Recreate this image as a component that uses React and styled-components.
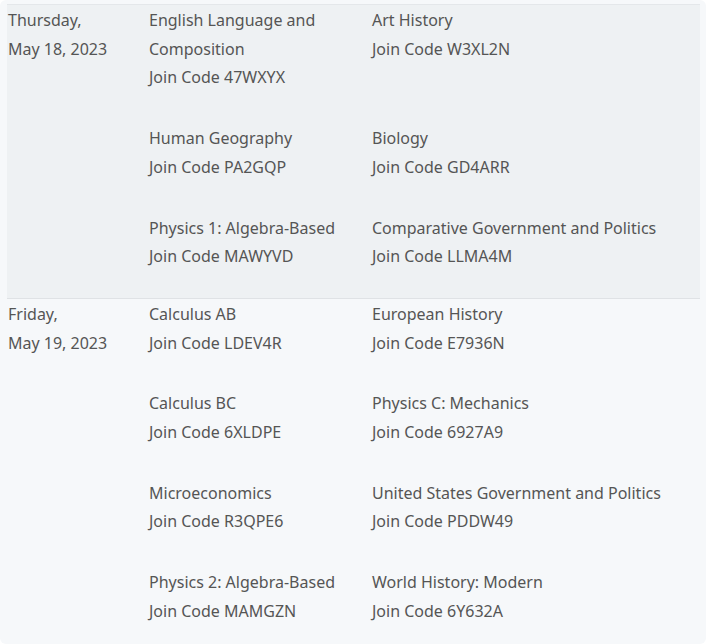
import React from 'react'
import styled, { createGlobalStyle } from 'styled-components'

const SCHEDULE = [
  {
    day: 'Thursday,',
    date: 'May 18, 2023',
    shaded: true,
    exams: [
      ['English Language and Composition', '47WXYX', 'Art History', 'W3XL2N'],
      ['Human Geography', 'PA2GQP', 'Biology', 'GD4ARR'],
      ['Physics 1: Algebra-Based', 'MAWYVD', 'Comparative Government and Politics', 'LLMA4M'],
    ],
  },
  {
    day: 'Friday,',
    date: 'May 19, 2023',
    exams: [
      ['Calculus AB', 'LDEV4R', 'European History', 'E7936N'],
      ['Calculus BC', '6XLDPE', 'Physics C: Mechanics', '6927A9'],
      ['Microeconomics', 'R3QPE6', 'United States Government and Politics', 'PDDW49'],
      ['Physics 2: Algebra-Based', 'MAMGZN', 'World History: Modern', '6Y632A'],
    ],
  },
]

const GlobalStyle = createGlobalStyle`
  body {
    margin: 0;
    background: #ffffff;
  }
`

const App = () => (
  <Page>
    <GlobalStyle />
    <Table>
      {SCHEDULE.map(({ day, date, shaded, exams }) => (
        <Row key={date} shaded={shaded}>
          <DateCell>
            {day}
            <br />
            {date}
          </DateCell>
          {exams.map(([a, codeA, b, codeB]) => (
            <React.Fragment key={codeA}>
              <Exam>
                <ExamName>{a}</ExamName>
                Join Code {codeA}
              </Exam>
              <Exam>
                <ExamName>{b}</ExamName>
                Join Code {codeB}
              </Exam>
            </React.Fragment>
          ))}
        </Row>
      ))}
    </Table>
  </Page>
)

const Page = styled.div`
  width: 706px;
  height: 644px;
  box-sizing: border-box;
  background: #f6f8fa;
  border-radius: 6px;
  padding: 4px 6px 0 7px;
  overflow: hidden;
  font-family: 'Noto Sans', 'Open Sans', sans-serif;
  font-size: 16px;
  line-height: 28.7px;
  color: #555555;
`

const Table = styled.div`
  border-top: 1px solid #e4e7ea;
`

const Row = styled.div`
  display: grid;
  grid-template-columns: 142px 223px 1fr;
  padding-top: 1px;
  background: ${props => (props.shaded ? '#eef1f3' : 'transparent')};
  border-bottom: ${props => (props.shaded ? '1px solid #dfe2e5' : 'none')};
`

const DateCell = styled.div`
  grid-row: 1 / span 10;
  padding-left: 1px;
  white-space: nowrap;
`

const Exam = styled.div`
  padding-bottom: 32px;

  &:nth-last-child(-n + 2) {
    padding-bottom: 27px;
  }
`

const ExamName = styled.div``

export default App
